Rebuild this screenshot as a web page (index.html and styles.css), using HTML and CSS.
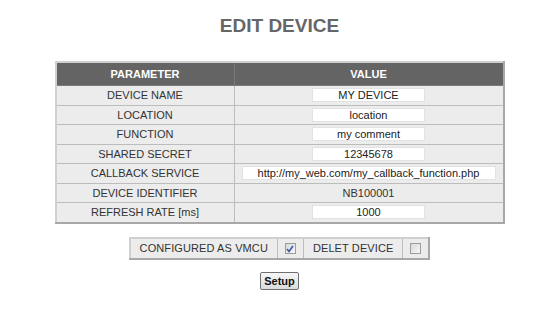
FILE: index.html
```html
<!DOCTYPE html>
<html lang="en">
<head>
    <meta charset="UTF-8">
    <title>Edit Device</title>
    <link rel="stylesheet" href="styles.css">
</head>
<body>
<h1 class="title">EDIT DEVICE</h1>
<form class="device-form">
    <table class="params">
        <tr>
            <th class="col-param">PARAMETER</th>
            <th>VALUE</th>
        </tr>
        <tr>
            <td>DEVICE NAME</td>
            <td><input type="text" class="field" value="MY DEVICE"></td>
        </tr>
        <tr>
            <td>LOCATION</td>
            <td><input type="text" class="field" value="location"></td>
        </tr>
        <tr>
            <td>FUNCTION</td>
            <td><input type="text" class="field" value="my comment"></td>
        </tr>
        <tr>
            <td>SHARED SECRET</td>
            <td><input type="text" class="field" value="12345678"></td>
        </tr>
        <tr>
            <td>CALLBACK SERVICE</td>
            <td><input type="text" class="field wide" value="http://my_web.com/my_callback_function.php"></td>
        </tr>
        <tr>
            <td>DEVICE IDENTIFIER</td>
            <td>NB100001</td>
        </tr>
        <tr>
            <td>REFRESH RATE [ms]</td>
            <td><input type="text" class="field" value="1000"></td>
        </tr>
    </table>

    <table class="flags">
        <tr>
            <td class="flag-label">CONFIGURED AS VMCU</td>
            <td class="flag-box">
                <span class="check">
                    <svg width="8" height="8" viewBox="0 0 8 8"><path d="M1 4 L3 6.5 L7 1" fill="none" stroke="#3b58a8" stroke-width="1.6"/></svg>
                </span>
            </td>
            <td class="flag-label">DELET DEVICE</td>
            <td class="flag-box"><span class="check"></span></td>
        </tr>
    </table>

    <div class="actions">
        <button type="button" class="setup-btn">Setup</button>
    </div>
</form>
</body>
</html>
```

FILE: styles.css
```css
body {
    font-family: "Liberation Sans", Arial, sans-serif;
    font-size: 11px;
    color: #333;
    background-color: #fff;
    margin: 0 8px 0 23px;
}

.title {
    color: #666;
    font-size: 19px;
    line-height: 22px;
    text-align: center;
    margin: 0;
    padding-top: 15px;
    height: 61px;
    box-sizing: border-box;
}

.device-form {
    display: flex;
    flex-direction: column;
    align-items: center;
}

.params {
    width: 450px;
    border-collapse: collapse;
    border: 2px solid;
    border-color: #d0d0d0 #a8a8a8 #a8a8a8 #d0d0d0;
}

.params th {
    background-color: #646464;
    color: #fff;
    font-weight: bold;
    height: 22px;
    padding: 0;
    border: 1px solid #7a7a7a;
}

.col-param {
    width: 177px;
}

.params td {
    background-color: #ececec;
    text-align: center;
    height: 18.5px;
    padding: 0;
    border: 1px solid #bcbcbc;
}

.field {
    font-family: "Liberation Sans", Arial, sans-serif;
    font-size: 11px;
    color: #222;
    text-align: center;
    width: 113px;
    height: 14px;
    padding: 0;
    margin: 0;
    border: 1px solid #e2e2e2;
    box-sizing: border-box;
    background-color: #fff;
    vertical-align: middle;
}

.field.wide {
    width: 254px;
}

.flags {
    margin-top: 13px;
    border-collapse: collapse;
    border: 2px solid;
    border-color: #d0d0d0 #a8a8a8 #a8a8a8 #d0d0d0;
}

.flags td {
    background-color: #ececec;
    border: 1px solid #bcbcbc;
    height: 19px;
    padding: 0;
    text-align: center;
}

.flag-label {
    padding: 0 9px !important;
    letter-spacing: 0.1px;
}

.flag-box {
    width: 25px;
}

.check {
    display: inline-flex;
    align-items: center;
    justify-content: center;
    width: 11px;
    height: 11px;
    box-sizing: border-box;
    border: 1px solid #9c9c9c;
    background: linear-gradient(135deg, #d8d8d8, #f8f8f8);
    vertical-align: middle;
}

.actions {
    margin-top: 12px;
}

.setup-btn {
    font-family: "Liberation Sans", Arial, sans-serif;
    font-size: 11px;
    font-weight: bold;
    color: #111;
    height: 18px;
    padding: 0 3px;
    border: 1px solid #707070;
    border-radius: 2px;
    background: linear-gradient(#f6f6f6, #dcdcdc);
}
```
